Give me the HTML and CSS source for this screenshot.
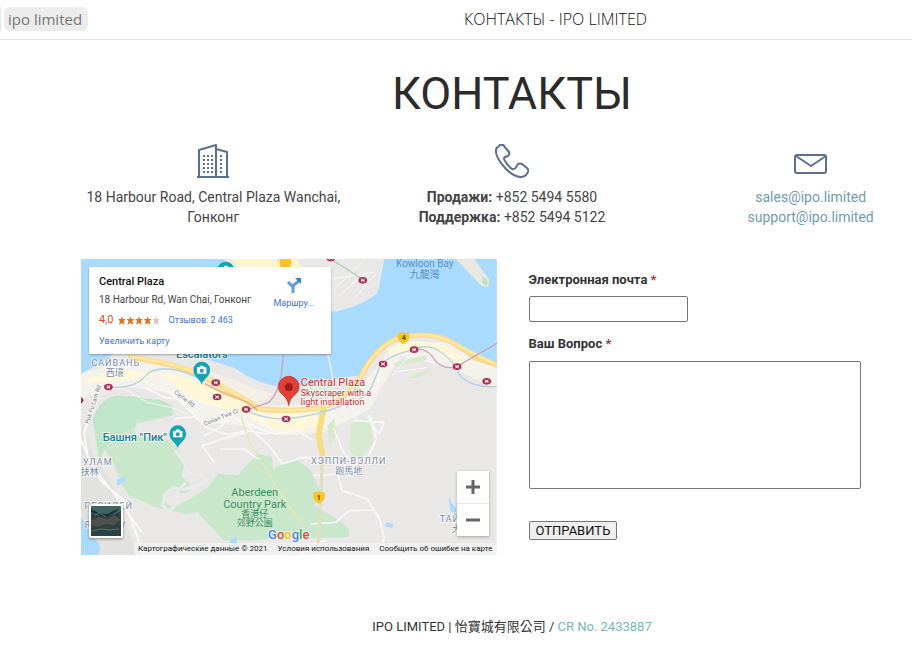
FILE: index.html
```html
<!DOCTYPE html>
<html lang="ru">
<head>
<meta charset="utf-8">
<meta name="viewport" content="width=device-width">
<title>КОНТАКТЫ - IPO LIMITED</title>
<link rel="stylesheet" href="styles.css">
</head>
<body>
<div class="page">
  <header class="topbar">
    <div class="tags"><span class="tag-edge"></span><span class="tag">ipo limited</span></div>
    <div class="page-name">КОНТАКТЫ - IPO LIMITED</div>
  </header>

  <main class="content">
    <h1>КОНТАКТЫ</h1>

    <section class="contacts">
      <div class="contact">
        <svg class="icon" viewBox="0 0 34 34" aria-hidden="true">
          <path d="M3 32V6L20 1v31M20 5l11 3v24M1 33h32"/>
          <path class="windows" d="M7 12h10M7 16h10M7 20h10M7 24h10M7 28h10M24 12h4M24 16h4M24 20h4M24 24h4M24 28h4"/>
        </svg>
        <p>18 Harbour Road, Central Plaza Wanchai,<br>Гонконг</p>
      </div>
      <div class="contact">
        <svg class="icon" viewBox="0 0 34 34" aria-hidden="true">
          <path d="M3 3 5 1Q8 0 9 2l5 6q1 2-1 4l-3 1q-2 1 0 4 3 5 7 8 3 1 4-2l2-3q2-1 4 0l5 4q2 2 1 4l-2 3q-2 2-5 2-7 0-15-8Q0 13 1 6q0-2 2-3z"/>
        </svg>
        <p><b>Продажи:</b> +852 5494 5580<br><b>Поддержка:</b> +852 5494 5122</p>
      </div>
      <div class="contact">
        <svg class="icon" viewBox="0 0 34 34" aria-hidden="true">
          <rect x="1" y="11" width="31" height="18" rx="2"/>
          <path d="m2 12 15 10 15-10"/>
        </svg>
        <p><a href="mailto:sales@ipo.limited">sales@ipo.limited</a><br><a href="mailto:support@ipo.limited">support@ipo.limited</a></p>
      </div>
    </section>

    <section class="details">
      <div class="map">
        <svg class="map-art" viewBox="0 0 416 296" preserveAspectRatio="xMidYMid slice" role="img" aria-label="Central Plaza">
          <defs>
            <g id="camera-pin">
              <path d="M0 42C-4 24-25 20-25-2a25 25 0 0 1 50 0C25 20 4 24 0 42z" fill="#12a5b5"/>
              <path d="M-14-10h7l4-5h7l4 5h6v19h-28z" fill="#fff"/><circle r="6" fill="#12a5b5"/>
            </g>
            <g id="station">
              <ellipse rx="13" ry="10" fill="#a92f55"/><path d="M-5-5 5 5M5-5-5 5M-5 0H5" stroke="#fff" stroke-width="3"/>
            </g>
            <path id="shield" d="M-16-16q8 3 16-3 8 6 16 3 3 16-2 25L0 19l-14-10q-5-9-2-25z" fill="#f9c522"/>
          </defs>
          <g transform="scale(.33333)">
            <path fill="#e9e8e7" d="M0 0h1248v888H0z"/>
            <path fill="#f4f2ec" d="M0 340 200 300 430 370 560 440 780 430 850 370 950 250 1110 250 1248 330V390L1120 330 960 290 900 390 870 450 730 520 600 530 480 500 360 490 260 400 110 380 0 420z"/>
            <path fill="#fff8d8" d="M0 370 100 330 300 350 420 400 560 465 690 450 720 500 600 525 500 470 330 420 240 345 70 370zM920 270 1000 245 1100 260 1160 310 1130 325 1050 265 930 290z"/>
            <path fill="#a9daff" d="M0 0h450l60 25H750L755 155q60 0 133-50L910 0h338v315q-48-5-91-30-60-62-140-61-75 0-123 55-24 30-48 71-45 1-80 10-100 25-188 20-60-12-115-52L330 285 120 270 45 320 0 345z"/>
            <path fill="#e9e8e7" d="M430 0H910l-15 88-125 70-20-3V25H455z"/>
            <path fill="#fff5cc" d="M450 0H650l10 25H470z"/>
            <path fill="#eae8e0" d="M1125 0h55l46 62-4 22-20-4z"/><path fill="#c0e1c1" d="M1205 50l18 18-4 12-14-5z"/>
            <path fill="#f5efe6" d="m370 330 180 68 30 5-30 25-120-35z"/>
            <path fill="#c9e8cb" d="M45 480q30-80 85-67 55-5 75 16 35-7 50 4 22 5 25 35l-25 7-95 20 5 35 100 12 30 30 15 50-8 28 20 20q15 30-20 32l-40-8-15 20q10 35 45 25 45-22 90-55l30-40 60 5 57-65 45 10 3 35 65-30 45 30 35 75-20 36 90 55q25 32 4 41H640L505 845H430L350 760l-35 5-90-20-80-35-20-30-28-70-39-60z"/>
            <path fill="#bfe6c8" d="M35 480q25-65 75-70l130 13 35 18-6 28-110 13 9 21-80 35-32 65z"/>
            <path fill="#d7ead0" d="M810 500q40-40 61-5l5 60-31 40q-45 0-38-45zm130-187 95-25 5 15-95 20zm40 43 60-23 13 7-50 18zM740 500l20-20 10 50-25 25z"/>
            <path fill="#e2e3df" d="M0 480l40 110 55 85 65 190 70 23H60L0 760z"/>
            <path fill="#a9daff" d="M0 770q20 35 36 65 30 20 18 53H0zM109 662l28-10-8 18-20 10zM1103 715l25 39-2 20-17-20zM917 790l22 7-4 10-22-6zM448 843l20-8v22l-24 13z"/>
            <g fill="none" stroke="#f8f8f8" stroke-linecap="round" stroke-linejoin="round">
              <path stroke-width="6" d="M70 370Q40 405 36 450L10 520l10 70 40 75 70 60 60 165M0 540l30 75 70 90 80 110"/>
              <path stroke="#ebebeb" stroke-width="9" d="M285 575l28 40 10 30 40 3 15 18-30 15-40 10-32-4-25 22-5 31 18 18 30-30-6-30 25-25"/>
              <path stroke-width="5" d="M280 480l60-8 40 35 60 20 60-12 60 10 50-20M360 490l-60-70-50-5-50-25M500 520l-75 20-60 20 35 50M500 500l65 60 40 55 60-20 60 5M520 450l60 75 70-10 40 25M760 510l25 65 35 43 42-23 25-55-20-70M700 650l70-5 15 50 75 25 36 60 15 56-20 52M690 795l75-5 40-35 75-2M655 890l38-35 40-10M370 530l50-25 25-35 120 50M420 570l70 0 42 30M820 485l90 5-15 35-18-22-14-30"/>
              <path stroke-width="3" d="M65 390 130 390 200 430 270 445 320 465M240 390l60 30 85 15M320 390l55 50M350 380l42 50M570 490l30-38M600 500l22-46M645 475l6 45M690 460l-5 50M790 480v-70M825 480l-20-60M880 410l35-125M935 350l60-70M950 338l85-12M755 60l120-20M775 110l70-60M820 120l65-75M755 95l95-90"/>
            </g>
            <g fill="none" stroke-linecap="round" stroke-linejoin="round">
              <path stroke="#f8d98a" stroke-width="16" d="M150 295Q290 315 360 350T540 450q100 10 180-4 65-15 119-89 42-94 117-121 90-22 160 15 50 30 65 45l67 21"/>
              <path stroke="#ffe7a0" stroke-width="8" d="M150 293Q290 314 360 348T540 450q100 10 180-4 65-15 119-89 42-94 117-121 90-22 160 15l130 66"/>
              <path stroke="#f5b873" stroke-width="6" d="M375 376q60 30 99 43 35 12 54 35"/>
              <path stroke="#f8dc80" stroke-width="18" d="m728 450-15 80 12 55"/><path stroke="#e1dfc2" stroke-width="10" d="M725 590 715 840l-18 48"/>
              <path stroke="#e9e6b5" stroke-width="5" d="m482 475 22 70 90 150 65 95M590 0l15 25"/>
              <path stroke="#ede9d8" stroke-width="5" d="m742 286 16 84"/>
              <path stroke="#b8d0de" stroke-width="4" d="M85 384q75 7 110-34 30-34 110-12l65 25M495 452q44 28 121 28 100-11 166-40 75-17 91-58l25-60q20-30 98-50 50-23 93 14 28 20 42 52 25 48 117 45"/>
              <path stroke="#c8a5bb" stroke-width="4" d="M607 288Q604 390 565 430l-70 24M1000 272q38-10 66 36 28 25 62 15l120-70"/>
              <path stroke="#b5d8ae" stroke-width="5" d="M750 0l95 60"/>
            </g>
            <use href="#station" x="846" y="64"/><use href="#station" x="750" y="-3"/><use href="#station" x="83" y="384"/><use href="#station" x="-5" y="424"/><use href="#station" x="405" y="371"/><use href="#station" x="409" y="414"/><use href="#station" x="496" y="451"/><use href="#station" x="616" y="480"/><use href="#station" x="907" y="315"/><use href="#station" x="1000" y="272"/><use href="#station" x="1129" y="323"/><use href="#station" x="1218" y="367"/>
            <use href="#shield" x="968" y="237"/><use href="#shield" x="715" y="715"/><use href="#shield" x="614" y="14"/>
            <use href="#camera-pin" x="363" y="335"/><use href="#camera-pin" x="291" y="526"/><use href="#camera-pin" x="435" y="35"/>
            <path fill="#e43f36" stroke="#b8302b" stroke-width="2" d="M624 440c-5-35-31-31-31-57a31 31 0 0 1 62 0c0 26-26 22-31 57z"/><circle cx="624" cy="384" r="12" fill="#a31c1c"/>
          </g>
          <g class="labels">
            <text class="road" x="323" y="81">4</text><text class="road" x="238" y="241">1</text>
            <text class="water" x="344" y="8">Kowloon Bay</text><text class="water" x="344" y="19">九龍灣</text>
            <text class="area" x="35" y="107">САЙВАНЬ</text><text class="area han" x="34" y="117">西環</text>
            <text class="sight" x="121" y="99">Escalators</text>
            <text class="sight" x="54" y="182">Башня "Пик"</text>
            <text class="area" x="17" y="206">УЛАМ</text><text class="area han" x="9" y="216">扶林</text>
            <text class="area" x="28" y="250">РЕСИДЕЙ</text><text class="area" x="25" y="269">RESIDEY</text>
            <text class="area" x="268" y="205">ХЭППИ-ВЭЛЛИ</text><text class="area han" x="268" y="215">跑馬地</text>
            <text class="park" x="174" y="237">Aberdeen</text><text class="park" x="174" y="249">Country Park</text><text class="park han" x="174" y="258">香港仔</text><text class="park han" x="174" y="267">郊野公園</text>
            <text class="area" x="380" y="263">ТАЙТАМ</text><text class="area han" x="380" y="273">大潭</text>
            <text class="place" x="220" y="127">Central Plaza</text><text class="place-note" x="220" y="137">Skyscraper with a</text><text class="place-note" x="220" y="146">light installation</text>
            <text class="street" transform="translate(93 134) rotate(37)">Caine Rd</text>
            <text class="street" transform="translate(124 167) rotate(-22)">Conan Twe Cr</text>
            <text class="street" transform="translate(8 165) rotate(-72)">Pok Fu Lam Rd</text>
            <text class="google" x="208" y="280"><tspan fill="#4285f4">G</tspan><tspan fill="#ea4335">o</tspan><tspan fill="#fbbc05">o</tspan><tspan fill="#4285f4">g</tspan><tspan fill="#34a853">l</tspan><tspan fill="#ea4335">e</tspan></text>
          </g>
        </svg>

        <div class="place-card">
          <div class="place-info">
            <strong>Central Plaza</strong>
            <span class="address">18 Harbour Rd, Wan Chai, Гонконг</span>
            <span class="rating"><span class="score">4,0</span>
              <svg class="stars" viewBox="0 0 45 9" aria-hidden="true"><path fill="#e7711b" d="m4 0 1 3h3L6 5l1 4-3-2-3 2 1-4-2-2h3zM13 0l1 3h3l-2 2 1 4-3-2-3 2 1-4-2-2h3zM22 0l1 3h3l-2 2 1 4-3-2-3 2 1-4-2-2h3zM31 0l1 3h3l-2 2 1 4-3-2-3 2 1-4-2-2h3z"/><path fill="#ccc" d="m40 0 1 3h3l-2 2 1 4-3-2-3 2 1-4-2-2h3z"/></svg>
              <a href="#reviews">Отзывов: 2 463</a></span>
            <a href="#larger">Увеличить карту</a>
          </div>
          <a class="route" href="#route">
            <svg viewBox="0 0 16 16" aria-hidden="true"><path d="M7 16v-6L2 5M7 11q0-3 2-4l4-3" fill="none" stroke="#5c9fd8" stroke-width="3"/><path d="M9 1h6v6z" fill="#3b82c4"/></svg>
            Маршру...
          </a>
        </div>

        <button class="layer" type="button" aria-label="Спутник">
          <svg viewBox="0 0 30 30" aria-hidden="true"><path fill="#2b4243" d="M0 0h30v30H0z"/><path fill="#3f6660" d="m0 0h30v5l-6 3-8 2-3-1-5 1-8-3z"/><path fill="#1d3436" d="m0 3 8 4 8 1 12-6-3 4-9 5-7-1-9-4z"/><path fill="#4f4f4c" d="m0 14 9-3 7 2 7-4 7 5-7 5-8-1-8 3-7-2z"/><path d="m1 25 9-2 8 1 10-1M4 9l5-2 6 4" fill="none" stroke="#66706a"/></svg>
        </button>
        <div class="zoom"><button type="button" aria-label="Приблизить"><svg viewBox="0 0 14 14"><path d="M0 7h14M7 0v14"/></svg></button><button type="button" aria-label="Отдалить"><svg viewBox="0 0 14 14"><path d="M0 7h14"/></svg></button></div>
        <div class="credits"><span>Картографические данные © 2021</span><a href="#terms">Условия использования</a><a href="#report">Сообщить об ошибке на карте</a></div>
      </div>

      <form class="question">
        <label for="email">Электронная почта <span>*</span></label>
        <input id="email" type="email">
        <label for="message">Ваш Вопрос <span>*</span></label>
        <textarea id="message"></textarea>
        <button type="submit">ОТПРАВИТЬ</button>
      </form>
    </section>
  </main>

  <footer>IPO LIMITED | 怡寶城有限公司 / <a href="#company">CR No. 2433887</a></footer>
</div>
</body>
</html>
```
FILE: styles.css
```css
* { box-sizing: border-box; }
html { overflow-x: hidden; }
body {
  margin: 0;
  background: #fff;
  color: #444;
  font: 14px/20px Roboto, "Noto Sans CJK TC", sans-serif;
}
a { color: #6e9bb0; text-decoration: none; }
p { margin: 0; }

.page { min-width: 1024px; }

.topbar {
  display: grid;
  grid-template-columns: 29fr 35fr;
  align-items: center;
  height: 40px;
  padding-bottom: 2px;
  border-bottom: 1px solid #e2e2e2;
  font-family: "Open Sans", "Noto Sans", sans-serif;
}
.tags { display: flex; gap: 3px; }
.tag-edge { width: 1px; height: 24px; background: #e8e8e8; }
.tag {
  padding: 0 6px 0 4px;
  border-radius: 6px;
  background: #ececec;
  color: #777;
  font-size: 15px;
  line-height: 24px;
}
.page-name { color: #111; font-size: 16px; font-weight: 300; }

.content { padding: 34px 80px 0; }
h1 {
  margin: 0 0 30px;
  color: #2b2b2b;
  font-size: 45px;
  font-weight: 400;
  line-height: 40px;
  text-align: center;
}

.contacts {
  display: grid;
  grid-template-columns: repeat(3, 1fr);
  gap: 32px;
  text-align: center;
}
.icon {
  display: block;
  width: 34px;
  height: 34px;
  margin: 0 auto 9px;
  fill: none;
  stroke: #5b708c;
  stroke-width: 2;
  stroke-linejoin: round;
}
.windows { stroke-dasharray: 2 2; }
.contact p { white-space: nowrap; }

.details { display: flex; gap: 32px; margin-top: 32px; }

.map {
  position: relative;
  flex: 1;
  height: 296px;
  overflow: hidden;
  margin-left: 1px;
}
.map-art { display: block; width: 100%; height: 100%; }
.labels { stroke: #fff; stroke-width: 2px; stroke-opacity: .6; paint-order: stroke; text-anchor: middle; }
.labels .water { fill: #5b8fc7; font-size: 10px; stroke: none; }
.labels .area { fill: #7c8da8; font-size: 9px; letter-spacing: 1px; }
.labels .han { font-size: 9px; letter-spacing: 0; }
.labels .sight { fill: #14838f; font-size: 11px; font-weight: 500; }
.labels .park { fill: #3d8e66; font-size: 11px; stroke: none; }
.labels .park.han { font-size: 9px; }
.labels .place { fill: #c5302c; font-size: 11px; text-anchor: start; }
.labels .place-note { fill: #c5302c; font-size: 9px; text-anchor: start; }
.labels .street { fill: #777; font-size: 6px; text-anchor: start; }
.labels .road { fill: #5e4a00; font-size: 7px; font-weight: 700; stroke: none; }
.labels .google { font: 500 13px Roboto, sans-serif; }

.place-card {
  position: absolute;
  top: 8px;
  left: 8px;
  display: flex;
  justify-content: space-between;
  width: 242px;
  height: 87px;
  padding: 6px 10px;
  background: #fff;
  box-shadow: 0 1px 2px rgba(0, 0, 0, .3);
  font-size: 9px;
  line-height: 20px;
}
.place-card a { color: #4272d0; }
.place-info { display: flex; flex-direction: column; white-space: nowrap; }
.place-info strong { color: #111; font-size: 11px; font-weight: 500; line-height: 18px; }
.address { font-size: 10px; line-height: 18px; }
.rating { display: flex; align-items: center; gap: 4px; line-height: 22px; }
.rating a { margin-left: 4px; }
.score { color: #dd4b1a; font-size: 11px; }
.stars { width: 43px; height: 9px; }
.route { display: flex; flex-direction: column; align-items: center; width: 54px; padding-top: 4px; }
.route svg { width: 16px; height: 16px; }

.layer {
  position: absolute;
  left: 8px;
  bottom: 17px;
  width: 34px;
  height: 34px;
  padding: 2px;
  border: 0;
  border-radius: 2px;
  background: #fff;
  box-shadow: 0 1px 3px rgba(0, 0, 0, .4);
}
.layer svg { display: block; width: 30px; height: 30px; }
.zoom {
  position: absolute;
  right: 8px;
  bottom: 19px;
  width: 32px;
  background: #fff;
  box-shadow: 0 1px 3px rgba(0, 0, 0, .3);
}
.zoom button {
  display: grid;
  place-items: center;
  width: 100%;
  height: 32px;
  padding: 0;
  border: 0;
  background: none;
}
.zoom button + button { border-top: 1px solid #e6e6e6; height: 33px; }
.zoom svg { width: 14px; height: 14px; fill: none; stroke: #666; stroke-width: 3; }
.credits {
  position: absolute;
  right: 0;
  bottom: 0;
  display: flex;
  gap: 10px;
  padding: 0 4px;
  background: rgba(245, 245, 245, .7);
  color: #111;
  font-size: 8px;
  line-height: 12px;
  white-space: nowrap;
}
.credits a { color: #111; }

.question {
  display: flex;
  flex: 1;
  flex-direction: column;
  align-items: flex-start;
  padding-top: 13px;
}
.question label { color: #333; font-size: 13px; font-weight: 700; line-height: 16px; }
.question label span { color: #a33; }
.question input, .question textarea {
  border: 1px solid #767676;
  border-radius: 2px;
  background: #fff;
}
.question input { width: 159px; height: 26px; margin: 8px 0 14px; }
.question textarea { width: 80%; height: 128px; margin: 9px 0 32px; resize: none; }
.question button {
  height: 19px;
  padding: 0 6px;
  border: 1px solid #767676;
  border-radius: 2px;
  background: #efefef;
  color: #111;
  font: 13px/16px Roboto, sans-serif;
}

footer { padding: 62px 0 12px; color: #333; font-size: 13px; text-align: center; }
footer a { color: #75b9bd; }
```
